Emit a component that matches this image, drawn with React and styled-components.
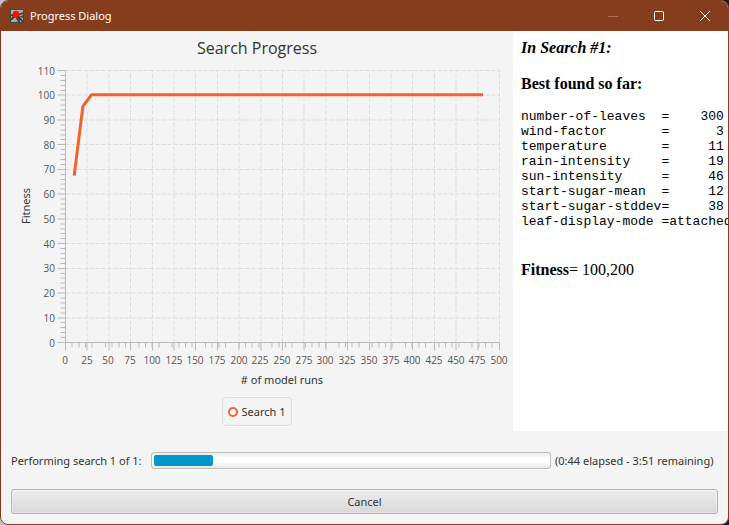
import React from "react";
import styled, { createGlobalStyle } from "styled-components";

const GlobalStyle = createGlobalStyle`
  * { box-sizing: border-box; }
  body {
    margin: 0;
    background: linear-gradient(to right, #bcc6cb 50%, #221c1c 50%);
    font-family: "Noto Sans", "Open Sans", sans-serif;
    font-size: 11px;
    color: #333;
  }
`;

const Window = styled.main`
  display: flex;
  flex-direction: column;
  min-height: 100vh;
  border: 1px solid #863d1e;
  border-radius: 8px;
  background: #f4f4f4;
  overflow: hidden;
`;

const TitleBar = styled.header`
  display: flex;
  align-items: center;
  height: 30px;
  padding-left: 9px;
  background: #863d1e;
  color: #fff;
`;

const WindowTitle = styled.h1`
  flex: 1;
  margin: 0;
  padding-left: 6px;
  font-size: 11px;
  font-weight: 400;
  line-height: 16px;
`;

const CaptionButton = styled.button`
  display: grid;
  place-items: center;
  width: 46px;
  height: 30px;
  padding: 0;
  border: 0;
  background: transparent;
  color: #fff;
  &:disabled { color: #a9705a; }
`;

const Content = styled.div`
  display: flex;
  flex: 1;
`;

const ChartPane = styled.section`
  flex: 1;
  min-width: 0;
  display: flex;
  flex-direction: column;
  align-items: center;
`;

const ChartTitle = styled.h2`
  margin: 0;
  padding-top: 5px;
  font-family: "Open Sans", "Noto Sans", sans-serif;
  font-size: 16px;
  font-weight: 400;
  line-height: 25px;
`;

const ChartSvg = styled.svg`
  display: block;
  width: 100%;
  height: auto;
`;

const TickText = styled.text`
  font-family: "Open Sans", "Noto Sans", sans-serif;
  font-size: 10px;
  fill: #555;
  text-anchor: ${(p) => p.$anchor};
`;

const AxisText = styled.text`
  font-size: 11px;
  fill: #333;
  text-anchor: middle;
`;

const Legend = styled.div`
  display: flex;
  align-items: center;
  gap: 4px;
  height: 29px;
  margin-top: 6px;
  padding: 0 6px 0 5px;
  border: 1px solid #dedede;
  border-radius: 4px;
  box-shadow: 0 1px 0 #fff;
`;

const LegendSymbol = styled.span`
  width: 10px;
  height: 10px;
  border: 2px solid #f3622d;
  border-radius: 50%;
  background: #fff;
`;

const Report = styled.section`
  width: 215px;
  flex: none;
  height: 400px;
  padding: 8px 0 0 8px;
  overflow: hidden;
  background: #fff;
  color: #000;
  font-family: "Liberation Serif", serif;
  font-size: 16px;
  line-height: 18px;
`;

const Heading = styled.h3`
  margin: 0 0 18px;
  font-size: 16px;
  font-weight: 700;
  font-style: ${(p) => (p.$italic ? "italic" : "normal")};
`;

const ParameterTable = styled.table`
  width: 26ch;
  table-layout: fixed;
  border-collapse: collapse;
  margin: -2px 0 32px;
  font-family: "Liberation Mono", monospace;
  font-size: 13px;
  line-height: 15px;
`;

const Cell = styled.td`
  width: ${(p) => p.$chars}ch;
  padding: 0;
  text-align: ${(p) => p.$align || "left"};
  font-weight: 400;
  white-space: nowrap;
`;

const FitnessLine = styled.p`
  margin: 0;
`;

const Footer = styled.footer`
  display: flex;
  flex-direction: column;
  gap: 19px;
  padding: 19px 10px 10px;
`;

const ProgressRow = styled.div`
  display: flex;
  align-items: center;
  gap: 4px;
  height: 20px;
  white-space: nowrap;
`;

const ProgressLabel = styled.label`
  min-width: 136px;
`;

const ProgressTime = styled.span`
  min-width: 163px;
`;

const ProgressBar = styled.progress`
  appearance: none;
  flex: 1;
  min-width: 0;
  height: 17px;
  padding: 2px;
  border: 1px solid #bdbdbd;
  border-radius: 3px;
  background: linear-gradient(#ececec, #fff 35%, #fff 60%, #e8e8e8);
  box-shadow: 0 1px 0 #fff;
  &::-webkit-progress-bar { background: transparent; }
  &::-webkit-progress-value {
    background: #0096c9;
    border-radius: 2px;
  }
`;

const CancelButton = styled.button`
  width: 100%;
  height: 25px;
  padding: 0;
  border: 1px solid #b2b2b2;
  border-radius: 3px;
  background: linear-gradient(#ececec, #d9d9d9);
  box-shadow: inset 0 1px 0 #fafafa, inset 1px 0 0 #ededed, inset -1px 0 0 #ededed, inset 0 -1px 0 #e2e2e2;
  color: #333;
  font: inherit;
`;

const PLOT = { left: 64.5, right: 498.5, top: 9.5, bottom: 281.5, maxX: 500, maxY: 110 };
const snap = (v) => Math.round(v * 2) / 2;
const xAt = (v) => PLOT.left + (v / PLOT.maxX) * (PLOT.right - PLOT.left);
const yAt = (v) => PLOT.bottom - (v / PLOT.maxY) * (PLOT.bottom - PLOT.top);
const range = (count, step) => Array.from({ length: count }, (_, i) => i * step);

const xTicks = range(21, 25);
const yTicks = range(12, 10);
const xMinor = range(65, 1)
  .filter((k) => k % 5 !== 0)
  .map((k) => snap(PLOT.left + (k * 20) / 3));
const yMinor = range(55, 2).filter((v) => v % 10 !== 0);
const fitness = [[10, 67.5], [20, 95.5], [30, 100.2], [481, 100.2]];

const parameters = [
  ["number-of-leaves", "300"],
  ["wind-factor", "3"],
  ["temperature", "11"],
  ["rain-intensity", "19"],
  ["sun-intensity", "46"],
  ["start-sugar-mean", "12"],
  ["start-sugar-stddev", "38"],
  ["leaf-display-mode", "attached"],
];

function AppIcon() {
  return (
    <svg width="14" height="14" viewBox="0 0 14 14" aria-hidden="true">
      <rect width="14" height="14" rx="1" fill="#414943" />
      <path d="M1 1h12v5L9 8 5 7 1 9z" fill="#a6b3ad" />
      <path d="M1 10l4-2 3 5H1zM10 8l3 1v4h-3z" fill="#9fb0a0" />
      <path d="M8 6l5-2M5 7l-4 4M8 7l5 6" stroke="#4f2826" strokeWidth="1.5" />
      <path d="M0 6l3-1v3z" fill="#71211c" />
      <circle cx="6" cy="5" r="3.2" fill="#fb0d08" />
    </svg>
  );
}

function FitnessChart() {
  return (
    <ChartSvg viewBox="0 0 512 330" role="img" aria-label="Fitness by number of model runs">
      <g stroke="#dcdcdc" strokeDasharray="4 2">
        {xTicks.slice(1).map((v) => (
          <path key={`x${v}`} d={`M${snap(xAt(v))} ${PLOT.bottom}V${PLOT.top}`} />
        ))}
        {yTicks.slice(1).map((v) => (
          <path key={`y${v}`} d={`M${PLOT.left} ${snap(yAt(v))}H${PLOT.right}`} />
        ))}
      </g>
      <g stroke="#bababa">
        <path d={`M${PLOT.left} ${PLOT.top}V${PLOT.bottom}H${PLOT.right}`} fill="none" />
        {xTicks.map((v) => (
          <path key={`x${v}`} d={`M${snap(xAt(v))} ${PLOT.bottom}v8`} />
        ))}
        {yTicks.map((v) => (
          <path key={`y${v}`} d={`M${PLOT.left} ${snap(yAt(v))}h-8`} />
        ))}
        {xMinor.map((x) => (
          <path key={`mx${x}`} d={`M${x} ${PLOT.bottom}v5`} />
        ))}
        {yMinor.map((v) => (
          <path key={`my${v}`} d={`M${PLOT.left} ${snap(yAt(v))}h-5`} />
        ))}
      </g>
      {xTicks.map((v) => (
        <TickText key={`x${v}`} x={Math.floor(xAt(v))} y="303" $anchor="middle">{v}</TickText>
      ))}
      {yTicks.map((v) => (
        <TickText key={`y${v}`} x="54" y={Math.round(yAt(v) + 4)} $anchor="end">{v}</TickText>
      ))}
      <polyline
        points={fitness.map(([x, y]) => `${xAt(x)},${yAt(y)}`).join(" ")}
        fill="none"
        stroke="#f3622d"
        strokeWidth="3"
        strokeLinejoin="bevel"
      />
      <AxisText x="281" y="323">
        # of model runs
      </AxisText>
      <AxisText transform="translate(29 145) rotate(-90)">Fitness</AxisText>
    </ChartSvg>
  );
}

export default function App() {
  return (
    <>
      <GlobalStyle />
      <Window>
        <TitleBar>
          <AppIcon />
          <WindowTitle>Progress Dialog</WindowTitle>
          <CaptionButton disabled aria-label="Minimize">
            <svg width="10" height="10" stroke="currentColor"><path d="M0 5.5h10" /></svg>
          </CaptionButton>
          <CaptionButton aria-label="Maximize">
            <svg width="10" height="10" stroke="currentColor" fill="none">
              <rect x="0.5" y="0.5" width="9" height="9" rx="1" />
            </svg>
          </CaptionButton>
          <CaptionButton aria-label="Close">
            <svg width="10" height="10" stroke="currentColor"><path d="M0 0l10 10M10 0L0 10" /></svg>
          </CaptionButton>
        </TitleBar>
        <Content>
          <ChartPane>
            <ChartTitle>Search Progress</ChartTitle>
            <FitnessChart />
            <Legend>
              <LegendSymbol />
              Search 1
            </Legend>
          </ChartPane>
          <Report>
            <Heading $italic>In Search #1:</Heading>
            <Heading>Best found so far:</Heading>
            <ParameterTable>
              <tbody>
                {parameters.map(([name, value]) => (
                  <tr key={name}>
                    <Cell as="th" scope="row" $chars={18}>{name}</Cell>
                    <Cell $chars={1}>=</Cell>
                    <Cell $chars={7} $align="right">{value}</Cell>
                  </tr>
                ))}
              </tbody>
            </ParameterTable>
            <FitnessLine><b>Fitness</b>= 100,200</FitnessLine>
          </Report>
        </Content>
        <Footer>
          <ProgressRow>
            <ProgressLabel htmlFor="search-progress">Performing search 1 of 1:</ProgressLabel>
            <ProgressBar id="search-progress" max="100" value="15" />
            <ProgressTime>(0:44 elapsed - 3:51 remaining)</ProgressTime>
          </ProgressRow>
          <CancelButton type="button">Cancel</CancelButton>
        </Footer>
      </Window>
    </>
  );
}
